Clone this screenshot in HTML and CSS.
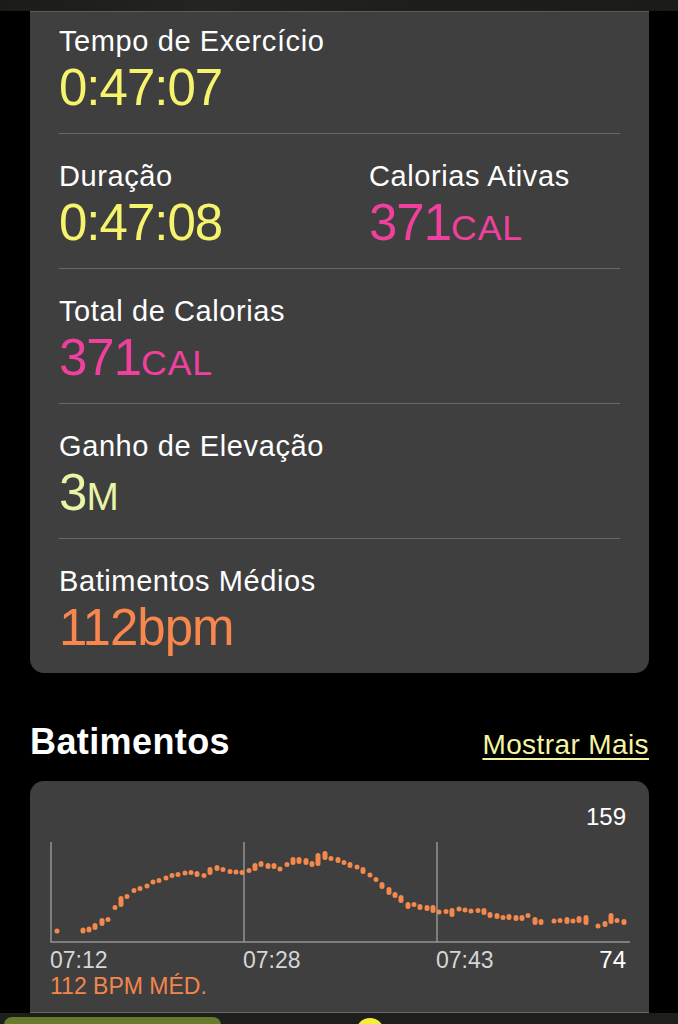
FILE: index.html
```html
<!DOCTYPE html>
<html lang="pt">
<head>
<meta charset="utf-8">
<title>Resumo do Treino</title>
<link rel="stylesheet" href="styles.css">
</head>
<body>
<div class="topbar"></div>
<main class="page">
  <section class="card stats">
    <div class="row first">
      <div class="stat">
        <div class="label">Tempo de Exercício</div>
        <div class="value yellow">0:47:07</div>
      </div>
    </div>
    <div class="row">
      <div class="stat">
        <div class="label">Duração</div>
        <div class="value yellow">0:47:08</div>
      </div>
      <div class="stat">
        <div class="label">Calorias Ativas</div>
        <div class="value pink">371<span class="unit">CAL</span></div>
      </div>
    </div>
    <div class="row">
      <div class="stat">
        <div class="label">Total de Calorias</div>
        <div class="value pink">371<span class="unit">CAL</span></div>
      </div>
    </div>
    <div class="row">
      <div class="stat">
        <div class="label">Ganho de Elevação</div>
        <div class="value cream">3<span class="unit unit-m">M</span></div>
      </div>
    </div>
    <div class="row last">
      <div class="stat">
        <div class="label">Batimentos Médios</div>
        <div class="value orange">112bpm</div>
      </div>
    </div>
  </section>

  <div class="section-head">
    <h2 class="section-title">Batimentos</h2>
    <a class="more" href="#">Mostrar Mais</a>
  </div>

  <section class="card chart-card">
    <div class="max">159</div>
    <svg class="chart" width="619" height="108" viewBox="30 838 619 108">
      <g class="axes">
        <line x1="51" y1="842" x2="51" y2="942"/>
        <line x1="244" y1="842" x2="244" y2="942"/>
        <line x1="437" y1="842" x2="437" y2="942"/>
        <line x1="50.25" y1="942" x2="630" y2="942"/>
      </g>
      <path class="points" d="M57 931V931 M83 930V931 M89 929V930 M95 925.5V927.5 M102 920.5V923.5 M108 919.5V919.5 M115 907.5V907.5 M121 898.5V904.5 M127 896.5V896.5 M134 890.5V890.5 M140 888.5V888.5 M147 886V886 M153 882V882 M159 880.5V880.5 M166 878V878 M172 875.5V875.5 M178 874.5V874.5 M185 873V873 M191 872.5V872.5 M197 873.5V874.5 M204 875.5V875.5 M210 869.5V872.5 M217 867.5V868.5 M223 869.5V869.5 M230 871.5V871.5 M236 872V872 M242 872.5V872.5 M249 870.5V870.5 M255 865.5V868.5 M261 863.5V864.5 M268 865.5V866.5 M274 865.5V866.5 M280 869V869 M287 864.5V864.5 M293 859.5V862.5 M299 859.5V861.5 M306 860.5V862.5 M312 863.5V864.5 M318 855.5V863.5 M325 853.5V857.5 M331 858.5V858.5 M338 859.5V860.5 M344 862.5V862.5 M350 864.5V865.5 M357 867V867 M363 869.5V871.5 M370 875V875 M376 879.5V879.5 M382 884.5V886.5 M389 889.5V892.5 M395 894.5V895.5 M401 897.5V900.5 M408 904.5V906.5 M414 904.5V904.5 M420 906.5V907.5 M427 907.5V908.5 M433 907.5V910.5 M439 912V912 M446 911.5V911.5 M452 910.5V914.5 M459 909V909 M465 910V910 M471 911V911 M478 910.5V910.5 M484 910.5V912.5 M490 914.5V915.5 M497 915.5V916.5 M503 917.5V917.5 M509 916.5V917.5 M516 917.5V918.5 M522 917.5V918.5 M528 915.5V915.5 M535 919.5V922.5 M541 921.5V922.5 M554 921V921 M560 920.5V920.5 M567 919.5V921.5 M573 921V921 M579 918.5V920.5 M586 917.5V922.5 M598 926V926 M605 923.5V924.5 M611 915.5V921.5 M617 920.5V920.5 M624 921.5V922.5"/>
    </svg>
    <div class="xlabels">
      <span>07:12</span>
      <span>07:28</span>
      <span>07:43</span>
      <span class="min">74</span>
    </div>
    <div class="avg">112 BPM MÉD.</div>
  </section>
</main>
<div class="bottombar">
  <div class="tab-green"></div>
  <div class="tab-dot"></div>
</div>
</body>
</html>
```

FILE: styles.css
```css
html, body {
  margin: 0;
  padding: 0;
  background: #000;
}

body {
  font-family: "Liberation Sans", Arial, sans-serif;
  color: #fff;
  width: 678px;
  height: 1024px;
  overflow: hidden;
}

.topbar {
  position: fixed;
  top: 0;
  left: 0;
  right: 0;
  height: 11px;
  background: linear-gradient(90deg, #1b1b19 0%, #242421 30%, #1e1e1c 60%, #1b1b19 100%);
  z-index: 5;
}

.page {
  padding-top: 11px;
}

.card {
  background: #3f3f3f;
  width: 619px;
  margin-left: 30px;
  box-sizing: border-box;
  border-radius: 0 0 14px 14px;
}

.stats {
  border-top: 1px solid #5c5c5c;
  padding: 0 29px;
}

.row {
  display: grid;
  grid-template-columns: 310px 1fr;
  padding: 26px 0 19px;
  border-bottom: 1px solid #686868;
}

.row.first {
  padding-top: 13px;
}

.row.last {
  border-bottom: none;
}

.label {
  font-size: 29px;
  line-height: 33px;
  letter-spacing: 0.6px;
  color: #fff;
}

.value {
  margin-top: 4px;
  font-size: 51px;
  line-height: 52px;
  letter-spacing: -1px;
}

.unit {
  font-size: 0.7em;
  line-height: 1;
  letter-spacing: 0.8px;
}

.unit-m {
  font-size: 0.76em;
}

.yellow { color: #f6f46c; }
.pink { color: #f0409d; }
.cream { color: #eaf4a6; }
.orange { color: #f7874c; }

.section-head {
  display: flex;
  align-items: baseline;
  justify-content: space-between;
  width: 619px;
  margin: 48px 0 18px 30px;
}

.section-title {
  margin: 0;
  font-size: 36px;
  line-height: 42px;
  font-weight: 700;
  letter-spacing: 0.4px;
  color: #fff;
}

.more {
  font-size: 28px;
  line-height: 32px;
  letter-spacing: 0.4px;
  color: #f4f4a2;
  text-decoration: underline;
  text-decoration-thickness: 1.5px;
  text-underline-offset: 4px;
}

.chart-card {
  border-radius: 14px;
  padding: 22px 0 40px;
}

.max {
  text-align: right;
  padding-right: 23px;
  font-size: 24px;
  line-height: 28px;
  color: #fff;
}

.chart {
  display: block;
  margin-top: 7px;
}

.axes line {
  stroke: #959595;
  stroke-width: 1.5;
}

.points {
  fill: none;
  stroke: #f5884c;
  stroke-width: 5;
  stroke-linecap: round;
}

.xlabels {
  display: grid;
  grid-template-columns: 193px 193px 1fr auto;
  padding: 0 23px 0 20px;
  margin-top: 1px;
  font-size: 23px;
  line-height: 26px;
  color: #d6d6d6;
}

.xlabels .min {
  color: #fff;
  font-size: 24px;
}

.avg {
  padding-left: 20px;
  font-size: 23px;
  line-height: 26px;
  color: #f4864c;
}

.bottombar {
  position: fixed;
  left: 0;
  right: 0;
  bottom: 0;
  height: 11px;
  background: #1e1e1c;
  z-index: 5;
}

.bottombar::before {
  content: "";
  position: absolute;
  left: 30px;
  width: 619px;
  top: -1px;
  height: 1px;
  background: #6a6a6a;
}

.tab-green {
  position: absolute;
  left: 4px;
  top: 4px;
  width: 217px;
  height: 20px;
  border-radius: 8px;
  background: #687a2c;
}

.tab-dot {
  position: absolute;
  left: 356px;
  top: 5px;
  width: 28px;
  height: 28px;
  border-radius: 50%;
  background: #f3ec3a;
}
```
